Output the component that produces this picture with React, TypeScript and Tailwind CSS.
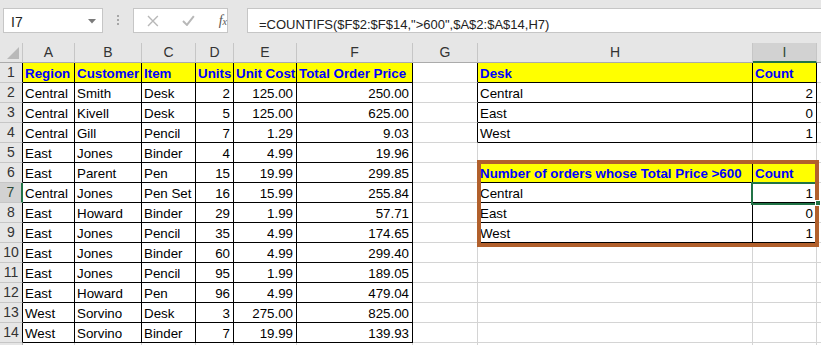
import React from "react";

// column widths: row header, then A..J (J only shows a sliver)
const rowHeadW = 23;
const colWidths = [52, 67, 54, 38, 63, 116, 65, 275, 64, 8];
const colNames = ["A", "B", "C", "D", "E", "F", "G", "H", "I", ""];

type Cell = { t: string; r?: boolean };

const mainData: string[][] = [
  ["Central", "Smith", "Desk", "2", "125.00", "250.00"],
  ["Central", "Kivell", "Desk", "5", "125.00", "625.00"],
  ["Central", "Gill", "Pencil", "7", "1.29", "9.03"],
  ["East", "Jones", "Binder", "4", "4.99", "19.96"],
  ["East", "Parent", "Pen", "15", "19.99", "299.85"],
  ["Central", "Jones", "Pen Set", "16", "15.99", "255.84"],
  ["East", "Howard", "Binder", "29", "1.99", "57.71"],
  ["East", "Jones", "Pencil", "35", "4.99", "174.65"],
  ["East", "Jones", "Binder", "60", "4.99", "299.40"],
  ["East", "Jones", "Pencil", "95", "1.99", "189.05"],
  ["East", "Howard", "Pen", "96", "4.99", "479.04"],
  ["West", "Sorvino", "Desk", "3", "275.00", "825.00"],
  ["West", "Sorvino", "Binder", "7", "19.99", "139.93"],
];

const sideData: Record<number, [string, string]> = {
  2: ["Central", "2"],
  3: ["East", "0"],
  4: ["West", "1"],
  7: ["Central", "1"],
  8: ["East", "0"],
  9: ["West", "1"],
};

const headerRow = ["Region", "Customer", "Item", "Units", "Unit Cost", "Total Order Price"];

function inTable(r: number, c: number) {
  if (r >= 1 && r <= 14 && c >= 0 && c <= 5) return true;
  if (r >= 1 && r <= 4 && (c === 7 || c === 8)) return true;
  if (r >= 6 && r <= 9 && (c === 7 || c === 8)) return true;
  return false;
}

function isYellow(r: number, c: number) {
  if (r === 1 && (c <= 5 || c === 7 || c === 8)) return true;
  if (r === 6 && (c === 7 || c === 8)) return true;
  return false;
}

function getCell(r: number, c: number): Cell {
  if (r === 1) {
    if (c <= 5) return { t: headerRow[c] };
    if (c === 7) return { t: "Desk" };
    if (c === 8) return { t: "Count" };
    return { t: "" };
  }
  if (r === 6 && c === 7) return { t: "Number of orders whose Total Price >600" };
  if (r === 6 && c === 8) return { t: "Count" };
  if (c <= 5 && mainData[r - 2]) return { t: mainData[r - 2][c], r: c >= 3 };
  if (sideData[r] && c === 7) return { t: sideData[r][0] };
  if (sideData[r] && c === 8) return { t: sideData[r][1], r: true };
  return { t: "" };
}

function FormulaBar() {
  return (
    <div className="flex h-[43px] items-start pt-[8px] bg-[#e6e6e6]">
      <div className="ml-[3px] w-[100px] h-[25px] shrink-0 bg-white border border-[#c6c6c6] flex items-start justify-between pl-[7px] pr-[6px] pt-[6px]">
        <span className="text-[14px] leading-none text-[#222]">I7</span>
        <svg className="mt-[4px]" width="8" height="5" viewBox="0 0 8 5">
          <path d="M0 0 L8 0 L4 4.5 Z" fill="#7a7a7a" />
        </svg>
      </div>
      <div className="ml-[14px] mt-[7px] flex flex-col gap-[2px] shrink-0">
        <div className="w-[2px] h-[2px] bg-[#a6a6a6]" />
        <div className="w-[2px] h-[2px] bg-[#a6a6a6]" />
        <div className="w-[2px] h-[2px] bg-[#a6a6a6]" />
      </div>
      <div className="ml-[14px] w-[95px] h-[25px] shrink-0 bg-white border border-[#c6c6c6] flex items-center">
        <svg className="ml-[13px]" width="12" height="12" viewBox="0 0 12 12">
          <path d="M1 1 L11 11 M11 1 L1 11" stroke="#b8b8b8" strokeWidth="1.4" />
        </svg>
        <svg className="ml-[23px]" width="13" height="11" viewBox="0 0 13 11">
          <path d="M1 6 L5 10 L12 1" stroke="#b8b8b8" strokeWidth="2" fill="none" />
        </svg>
        <span className="ml-[24px] text-[14px] italic text-[#555] font-['Liberation_Serif',serif] leading-none">
          f<span className="text-[10px]">x</span>
        </span>
      </div>
      <div className="ml-[19px] w-[600px] h-[25px] shrink-0 bg-white border border-[#c6c6c6] flex items-start pl-[11px] pt-[9px]">
        <span className="text-[13px] leading-none text-[#222] whitespace-nowrap">
          =COUNTIFS($F$2:$F$14,"&gt;600",$A$2:$A$14,H7)
        </span>
      </div>
    </div>
  );
}

function ColumnHeader() {
  return (
    <div className="flex h-[20px]">
      <div
        className="relative h-[20px] shrink-0 bg-[#e6e6e6] border-r border-b border-r-[#c6c6c6] border-b-[#ababab]"
        style={{ width: rowHeadW }}
      >
        <svg className="absolute right-[3px] bottom-[3px]" width="12" height="12" viewBox="0 0 12 12">
          <path d="M12 0 L12 12 L0 12 Z" fill="#b9b9b9" />
        </svg>
      </div>
      {colWidths.map((w, c) => {
        const sel = c === 8;
        return (
          <div
            key={c}
            className={
              sel
                ? "h-[20px] shrink-0 flex items-center justify-center bg-[#d2d2d2] border-r border-r-[#c6c6c6] border-b-2 border-b-[#217346] text-[14px] text-[#2b4a37]"
                : "h-[20px] shrink-0 flex items-center justify-center bg-[#e6e6e6] border-r border-r-[#c6c6c6] border-b border-b-[#ababab] text-[14px] text-[#333]"
            }
            style={{ width: w }}
          >
            {colNames[c]}
          </div>
        );
      })}
    </div>
  );
}

function GridRow({ r }: { r: number }) {
  const selRow = r === 7;
  return (
    <div className="flex h-[20px]">
      <div
        className={
          selRow
            ? "h-[20px] shrink-0 flex items-center justify-center bg-[#d2d2d2] border-r-2 border-r-[#217346] border-b border-b-[#c6c6c6] text-[14px] text-[#2b4a37]"
            : inTable(r, 0)
            ? "h-[20px] shrink-0 flex items-center justify-center bg-[#e6e6e6] border-r border-r-black border-b border-b-[#c6c6c6] text-[14px] text-[#333]"
            : "h-[20px] shrink-0 flex items-center justify-center bg-[#e6e6e6] border-r border-r-[#ababab] border-b border-b-[#c6c6c6] text-[14px] text-[#333]"
        }
        style={{ width: rowHeadW }}
      >
        {r <= 14 ? r : ""}
      </div>
      {colWidths.map((w, c) => {
        const cell = getCell(r, c);
        const rightBlack = inTable(r, c) || inTable(r, c + 1);
        const bottomBlack = inTable(r, c) || inTable(r + 1, c);
        const yellow = isYellow(r, c);
        return (
          <div
            key={c}
            className={[
              "h-[20px] shrink-0 overflow-hidden whitespace-nowrap border-r border-b leading-[21px] text-[13.33px]",
              rightBlack ? "border-r-black" : "border-r-[#d4d4d4]",
              bottomBlack ? "border-b-black" : "border-b-[#d4d4d4]",
              yellow ? "bg-[#ffff00] text-[#0000ff] font-bold" : "bg-white text-black",
              cell.r ? "text-right pr-[3px]" : "pl-[2px]",
            ].join(" ")}
            style={{ width: w }}
          >
            {cell.t}
          </div>
        );
      })}
    </div>
  );
}

export default function App() {
  const rows = Array.from({ length: 15 }).map((_, i) => i + 1);
  return (
    <div className="relative w-[821px] h-[345px] overflow-hidden bg-white font-['Liberation_Sans',Arial,sans-serif]">
      <FormulaBar />
      <ColumnHeader />
      {rows.map((r) => (
        <GridRow key={r} r={r} />
      ))}

      {/* active cell I7 */}
      <div className="absolute left-[751px] top-[182px] w-[67px] h-[23px] border-2 border-[#217346]" />
      {/* highlight box drawn over H6:I9 */}
      <div className="absolute left-[477px] top-[160px] w-[342px] h-[87px] border-4 border-[#b1602c]" />
      {/* fill handle */}
      <div className="absolute left-[815px] top-[200px] w-[6px] h-[6px] bg-[#217346] border border-white" />
    </div>
  );
}
